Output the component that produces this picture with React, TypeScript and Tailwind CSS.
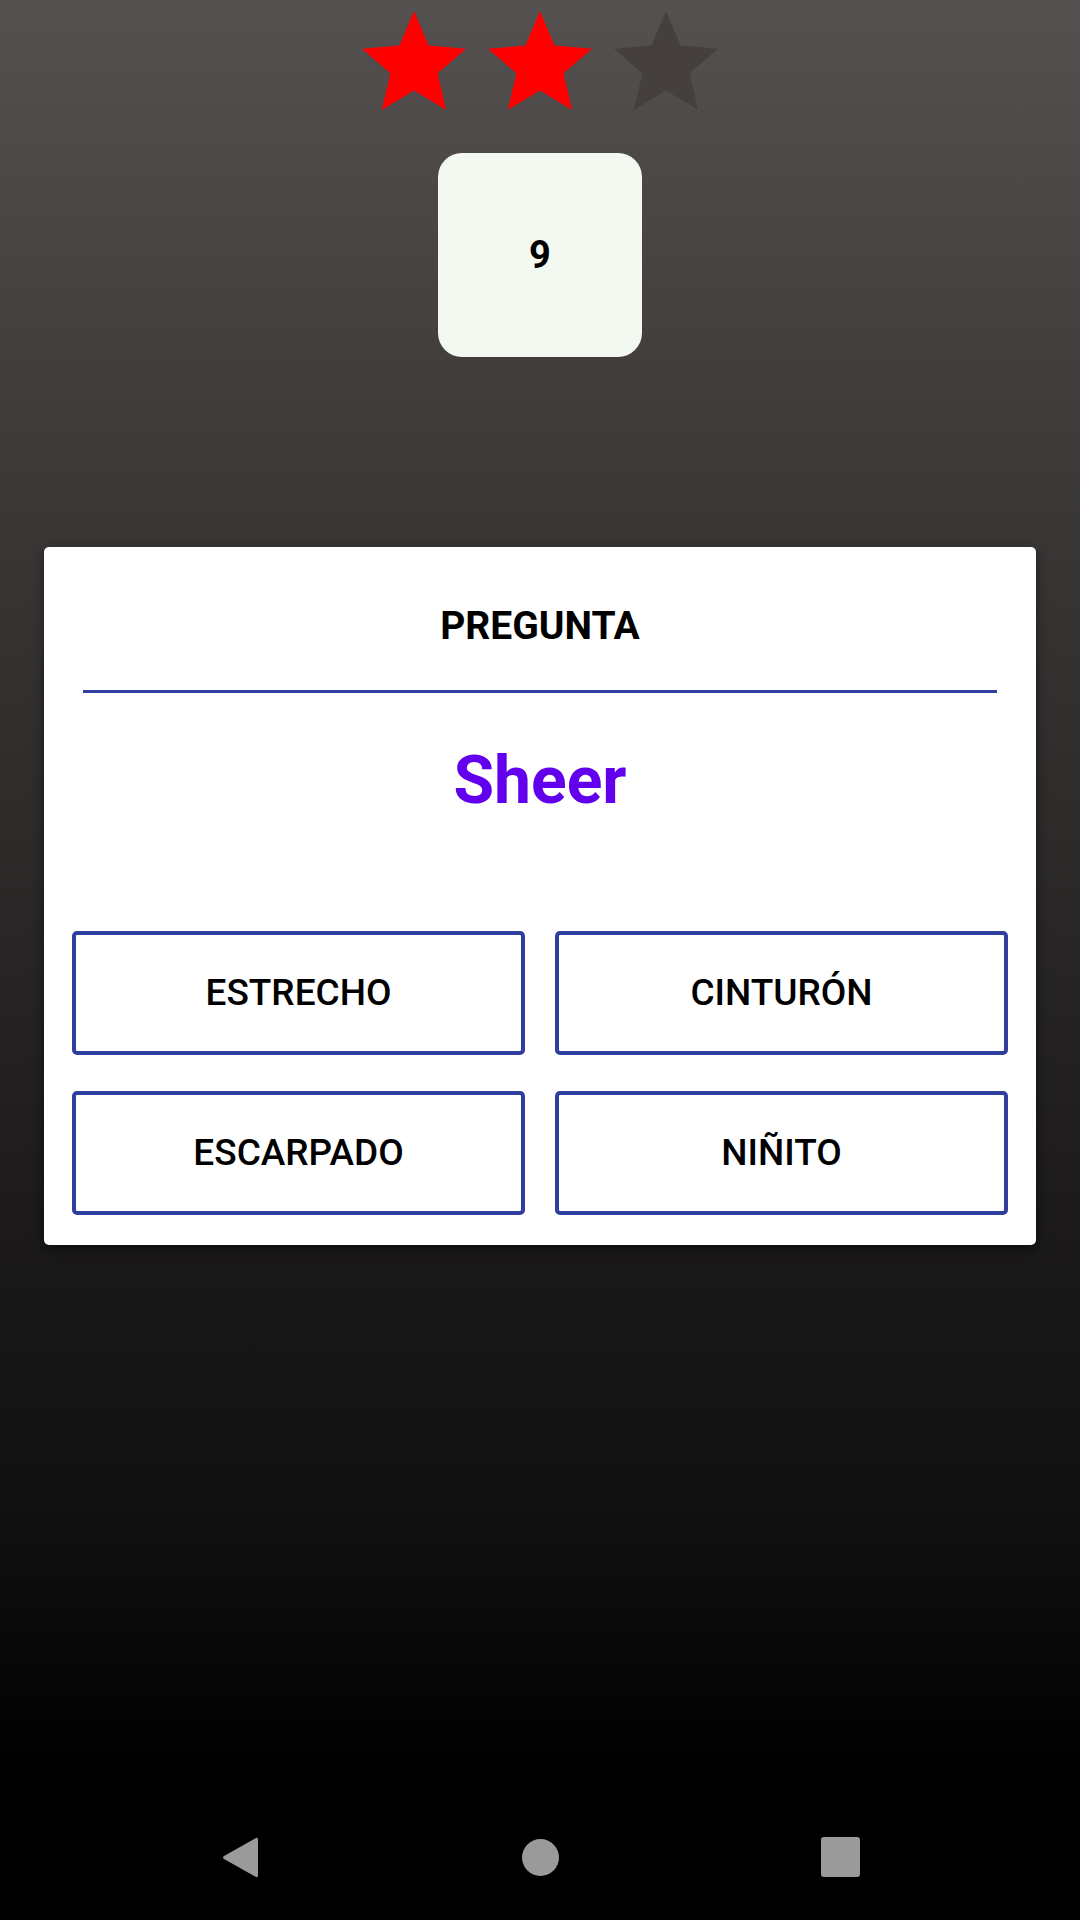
const starPath = 'M12 17.27L18.18 21l-1.64-7.03L22 9.24l-7.19-.61L12 2 9.19 8.63 2 9.24l5.46 4.73L5.82 21z'

function Star({ filled }: { filled: boolean }) {
  return (
    <svg width={104} height={99} viewBox="2 2 20 19">
      <path d={starPath} fill={filled ? '#ff0000' : '#463f3f'} />
    </svg>
  )
}

function Answer({ label }: { label: string }) {
  return (
    <button className="h-[124px] border-4 border-[#303f9f] rounded-[5px] bg-white flex items-center justify-center text-[37px] font-medium text-black">
      {label}
    </button>
  )
}

export default function App() {
  const answers = ['ESTRECHO', 'CINTURÓN', 'ESCARPADO', 'NIÑITO']

  return (
    <div className="w-[1080px] h-[1920px] flex flex-col font-['Roboto',sans-serif] overflow-hidden">
      <div className="flex-1 flex flex-col items-center bg-[linear-gradient(to_bottom,#565151_0%,#3c3838_27%,#2c2929_48%,#1a1818_70%,#121111_84%,#000000_99%)]">
        {/* rating */}
        <div className="flex gap-[22px] pt-[11px]">
          <Star filled />
          <Star filled />
          <Star filled={false} />
        </div>

        {/* counter */}
        <div className="mt-[43px] w-[204px] h-[204px] rounded-[24px] bg-[#f3f8f0] flex items-center justify-center">
          <span className="text-[38px] font-bold text-black">9</span>
        </div>

        {/* question card */}
        <div className="mt-[190px] w-[992px] bg-white rounded-[5px] shadow-[0_4px_12px_rgba(0,0,0,0.5)] pt-[57px] pb-[30px] flex flex-col">
          <p className="h-[45px] leading-[45px] text-center text-[39px] font-bold text-black">PREGUNTA</p>
          <div className="mt-[41px] mx-[39px] h-[3px] bg-[#303f9f]" />
          <p className="mt-[49px] h-[77px] leading-[77px] text-center text-[66px] font-bold text-[#6200ee]">Sheer</p>
          <div className="mt-[112px] px-[28px] grid grid-cols-2 gap-x-[30px] gap-y-[36px]">
            {answers.map(a => (
              <Answer key={a} label={a} />
            ))}
          </div>
        </div>
      </div>

      {/* system nav bar */}
      <div className="h-[126px] bg-black flex justify-center items-center">
        <div className="w-[300px] flex justify-center">
          <svg width={38} height={43} viewBox="0 0 38 43">
            <path d="M35 2 Q37 1 37 4 L37 39 Q37 42 35 41 L3 23 Q1 21.5 3 20 Z" fill="#9a9a9a" />
          </svg>
        </div>
        <div className="w-[300px] flex justify-center">
          <div className="w-[37px] h-[37px] rounded-full bg-[#9a9a9a]" />
        </div>
        <div className="w-[300px] flex justify-center">
          <div className="w-[39px] h-[40px] rounded-[3px] bg-[#9a9a9a]" />
        </div>
      </div>
    </div>
  )
}
